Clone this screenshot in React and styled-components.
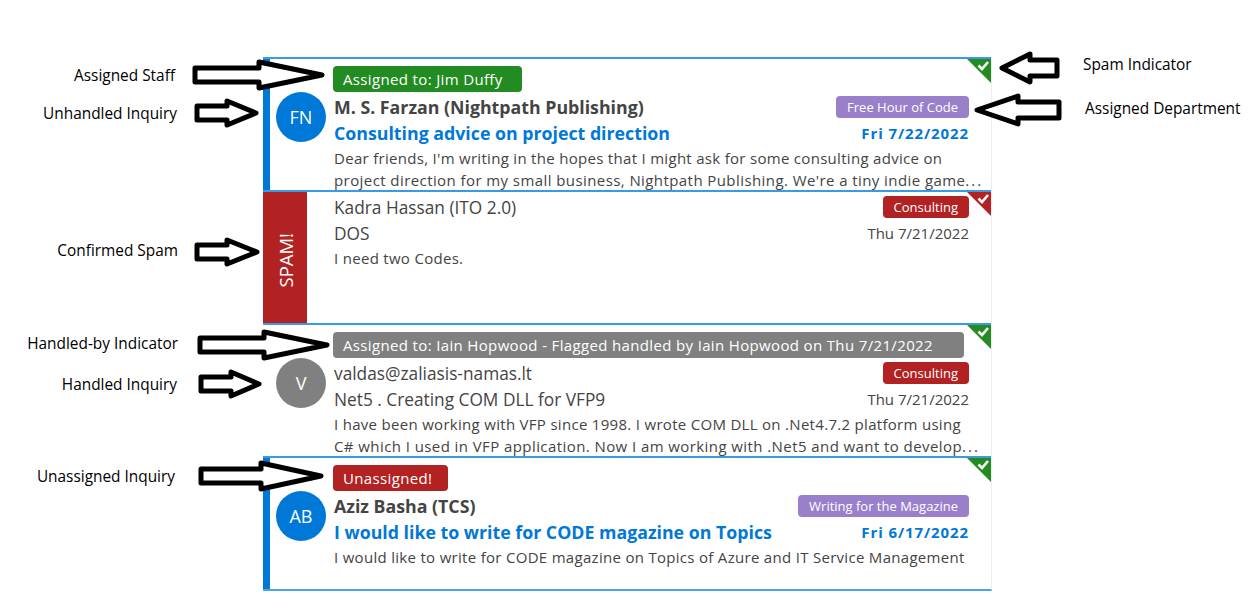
import styled, { createGlobalStyle } from 'styled-components';

const BLUE = '#0078d7';
const GREEN = '#228b22';
const RED = '#b22222';
const PURPLE = '#9a7fca';
const GRAY = '#808080';

const inquiries = [
	{
		id: 1,
		pill: 'Assigned to: Jim Duffy',
		pillColor: GREEN,
		pillWidth: 189,
		initials: 'FN',
		avatarColor: BLUE,
		strip: BLUE,
		unhandled: true,
		name: 'M. S. Farzan (Nightpath Publishing)',
		subject: 'Consulting advice on project direction',
		dept: 'Free Hour of Code',
		deptColor: PURPLE,
		date: 'Fri 7/22/2022',
		body: "Dear friends, I'm writing in the hopes that I might ask for some consulting advice on",
		more: "project direction for my small business, Nightpath Publishing. We're a tiny indie game",
		flag: GREEN,
	},
	{
		id: 2,
		spam: true,
		name: 'Kadra Hassan (ITO 2.0)',
		subject: 'DOS',
		dept: 'Consulting',
		deptColor: RED,
		date: 'Thu 7/21/2022',
		body: 'I need two Codes.',
		flag: RED,
	},
	{
		id: 3,
		pill: 'Assigned to: Iain Hopwood - Flagged handled by Iain Hopwood on Thu 7/21/2022',
		pillColor: GRAY,
		pillWidth: 631,
		initials: 'V',
		avatarColor: GRAY,
		name: 'valdas@zaliasis-namas.lt',
		subject: 'Net5 . Creating COM DLL for VFP9',
		dept: 'Consulting',
		deptColor: RED,
		date: 'Thu 7/21/2022',
		body: 'I have been working with VFP since 1998. I wrote COM DLL on .Net4.7.2 platform using',
		more: 'C# which I used in VFP application. Now I am working with .Net5 and want to develop',
		flag: GREEN,
	},
	{
		id: 4,
		pill: 'Unassigned!',
		pillColor: RED,
		pillWidth: 115,
		initials: 'AB',
		avatarColor: BLUE,
		strip: BLUE,
		unhandled: true,
		name: 'Aziz Basha (TCS)',
		subject: 'I would like to write for CODE magazine on Topics',
		dept: 'Writing for the Magazine',
		deptColor: PURPLE,
		date: 'Fri 6/17/2022',
		body: 'I would like to write for CODE magazine on Topics of Azure and IT Service Management',
		flag: GREEN,
	},
];

const callouts = [
	{ text: 'Assigned Staff', right: 1085, y: 75 },
	{ text: 'Unhandled Inquiry', right: 1083, y: 113 },
	{ text: 'Confirmed Spam', right: 1082, y: 250 },
	{ text: 'Handled-by Indicator', right: 1082, y: 343 },
	{ text: 'Handled Inquiry', right: 1083, y: 384 },
	{ text: 'Unassigned Inquiry', right: 1085, y: 476 },
	{ text: 'Spam Indicator', left: 1083, y: 64 },
	{ text: 'Assigned Department', left: 1085, y: 108 },
];

// tail x, head base x, tip x, centre y, half height of tail, half height of head
const arrows = [
	[195, 259, 322, 75, 7, 13],
	[197, 227, 256, 113, 7, 12],
	[197, 227, 257, 252, 7, 12],
	[200, 264, 327, 345, 7, 13],
	[201, 231, 259, 384, 7, 12],
	[201, 261, 321, 476, 7, 13],
	[1057, 1030, 1002, 68, 8, 14],
	[1059, 1018, 977, 110, 8, 14],
];

const arrowPoints = ([tail, base, tip, y, t, h]) =>
	[
		[tail, y - t],
		[base, y - t],
		[base, y - h],
		[tip, y],
		[base, y + h],
		[base, y + t],
		[tail, y + t],
	]
		.map((p) => p.join(','))
		.join(' ');

const Flag = ({ color }) => (
	<FlagIcon viewBox="0 0 24 24" width="24" height="24">
		<polygon points="0,0 24,0 24,24" fill={color} />
		<path d="M11.5 6.5 L15 10 L21 3" fill="none" stroke="#fff" strokeWidth="2.6" />
	</FlagIcon>
);

const App = () => {
	return (
		<Page>
			<GlobalStyle />
			<List>
				{inquiries.map((item) => (
					<Row key={item.id}>
						<Side>
							{item.spam ? (
								<SpamBar>
									<SpamText>SPAM!</SpamText>
								</SpamBar>
							) : (
								<>
									<Strip $color={item.strip} />
									<Avatar $color={item.avatarColor}>{item.initials}</Avatar>
								</>
							)}
						</Side>
						<Main $spam={item.spam}>
							{item.pill && (
								<AssignPill $color={item.pillColor} $width={item.pillWidth}>
									{item.pill}
								</AssignPill>
							)}
							<HeadRow>
								<Name $strong={item.unhandled}>{item.name}</Name>
								<DeptPill $color={item.deptColor}>{item.dept}</DeptPill>
							</HeadRow>
							<SubjectRow>
								<Subject $strong={item.unhandled}>{item.subject}</Subject>
								<DateText $strong={item.unhandled}>{item.date}</DateText>
							</SubjectRow>
							<Body>
								<BodyLine>{item.body}</BodyLine>
								{item.more && (
									<BodyLine $wide>
										{item.more}
										<Dots>...</Dots>
									</BodyLine>
								)}
							</Body>
						</Main>
						<Flag color={item.flag} />
					</Row>
				))}
			</List>
			{callouts.map((c) => (
				<Callout key={c.text} $left={c.left} $right={c.right} $y={c.y}>
					{c.text}
				</Callout>
			))}
			<ArrowLayer viewBox="0 0 1260 609" width="1260" height="609">
				{arrows.map((a) => (
					<polygon
						key={a[3]}
						points={arrowPoints(a)}
						fill="#fff"
						stroke="#000"
						strokeWidth="5"
						strokeLinejoin="round"
					/>
				))}
			</ArrowLayer>
		</Page>
	);
};

export default App;

// CSS
const GlobalStyle = createGlobalStyle`
	html, body {
		margin: 0;
		background: #fff;
	}
`;

const Page = styled.div`
	position: relative;
	width: 1260px;
	height: 609px;
	padding: 57px 0 0 263px;
	box-sizing: border-box;
	overflow: hidden;
	font-family: 'Open Sans', 'Noto Sans', sans-serif;
	color: #444;
`;

const List = styled.div`
	width: 729px;
	border-bottom: 2px solid #4da3e8;
	border-right: 1px solid #eee;
	box-sizing: border-box;
`;

const Row = styled.div`
	position: relative;
	display: flex;
	height: 133px;
	box-sizing: border-box;
	border-top: 2px solid #3b9ae6;
`;

const Side = styled.div`
	position: relative;
	flex: 0 0 71px;
	display: flex;
`;

const Strip = styled.div`
	flex: 0 0 7px;
	background: ${({ $color }) => $color || 'transparent'};
`;

const SpamBar = styled.div`
	flex: 0 0 44px;
	padding-top: 5px;
	box-sizing: border-box;
	background: ${RED};
	display: flex;
	align-items: center;
	justify-content: center;
`;

const SpamText = styled.span`
	writing-mode: vertical-rl;
	transform: rotate(180deg);
	color: #fff;
	font-size: 18.5px;
`;

const Avatar = styled.div`
	width: 50px;
	height: 50px;
	margin: 33px 0 0 6px;
	border-radius: 50%;
	background: ${({ $color }) => $color};
	color: #fff;
	font-size: 18px;
	display: flex;
	align-items: center;
	justify-content: center;
`;

const Main = styled.div`
	flex: 1;
	min-width: 0;
	padding: ${({ $spam }) => ($spam ? '2px' : '7px')} 22px 0 0;
`;

const AssignPill = styled.div`
	width: ${({ $width }) => $width}px;
	height: 26px;
	margin: 0 0 2px -1px;
	padding-left: 10px;
	box-sizing: border-box;
	border-radius: 4px;
	background: ${({ $color }) => $color};
	color: #fff;
	font-size: 15px;
	letter-spacing: 0.35px;
	line-height: 26px;
	white-space: nowrap;
`;

const HeadRow = styled.div`
	display: flex;
	align-items: center;
	justify-content: space-between;
	height: 26px;
`;

const Name = styled.div`
	font-size: ${({ $strong }) => ($strong ? '17.75px' : '17.3px')};
	font-weight: ${({ $strong }) => ($strong ? 700 : 400)};
`;

const DeptPill = styled.div`
	height: 22px;
	padding: 0 11px;
	border-radius: 4px;
	background: ${({ $color }) => $color};
	color: #fff;
	font-size: 13px;
	line-height: 22px;
`;

const SubjectRow = styled.div`
	display: flex;
	align-items: center;
	justify-content: space-between;
	height: 26px;
`;

const Subject = styled.div`
	font-size: ${({ $strong }) => ($strong ? '17.75px' : '17.3px')};
	font-weight: ${({ $strong }) => ($strong ? 700 : 400)};
	color: ${({ $strong }) => ($strong ? BLUE : '#444')};
`;

const DateText = styled.div`
	font-size: 15px;
	font-weight: ${({ $strong }) => ($strong ? 700 : 400)};
	letter-spacing: ${({ $strong }) => ($strong ? '0.9px' : '0')};
	color: ${({ $strong }) => ($strong ? BLUE : '#444')};
`;

const Body = styled.div`
	margin-top: 1px;
`;

const BodyLine = styled.div`
	font-size: 15px;
	letter-spacing: ${({ $wide }) => ($wide ? '0.42px' : '0.3px')};
	line-height: 22px;
	white-space: nowrap;
`;

const Dots = styled.span`
	letter-spacing: 2px;
`;

const FlagIcon = styled.svg`
	position: absolute;
	top: 0;
	right: 0;
`;

const Callout = styled.div`
	position: absolute;
	top: ${({ $y }) => $y - 9}px;
	${({ $left }) => ($left ? `left: ${$left}px;` : '')}
	${({ $right }) => ($right ? `right: ${$right}px;` : '')}
	font-family: 'Open Sans', sans-serif;
	font-size: 15.4px;
	line-height: 20px;
	color: #000;
	white-space: nowrap;
`;

const ArrowLayer = styled.svg`
	position: absolute;
	top: 0;
	left: 0;
	pointer-events: none;
`;
